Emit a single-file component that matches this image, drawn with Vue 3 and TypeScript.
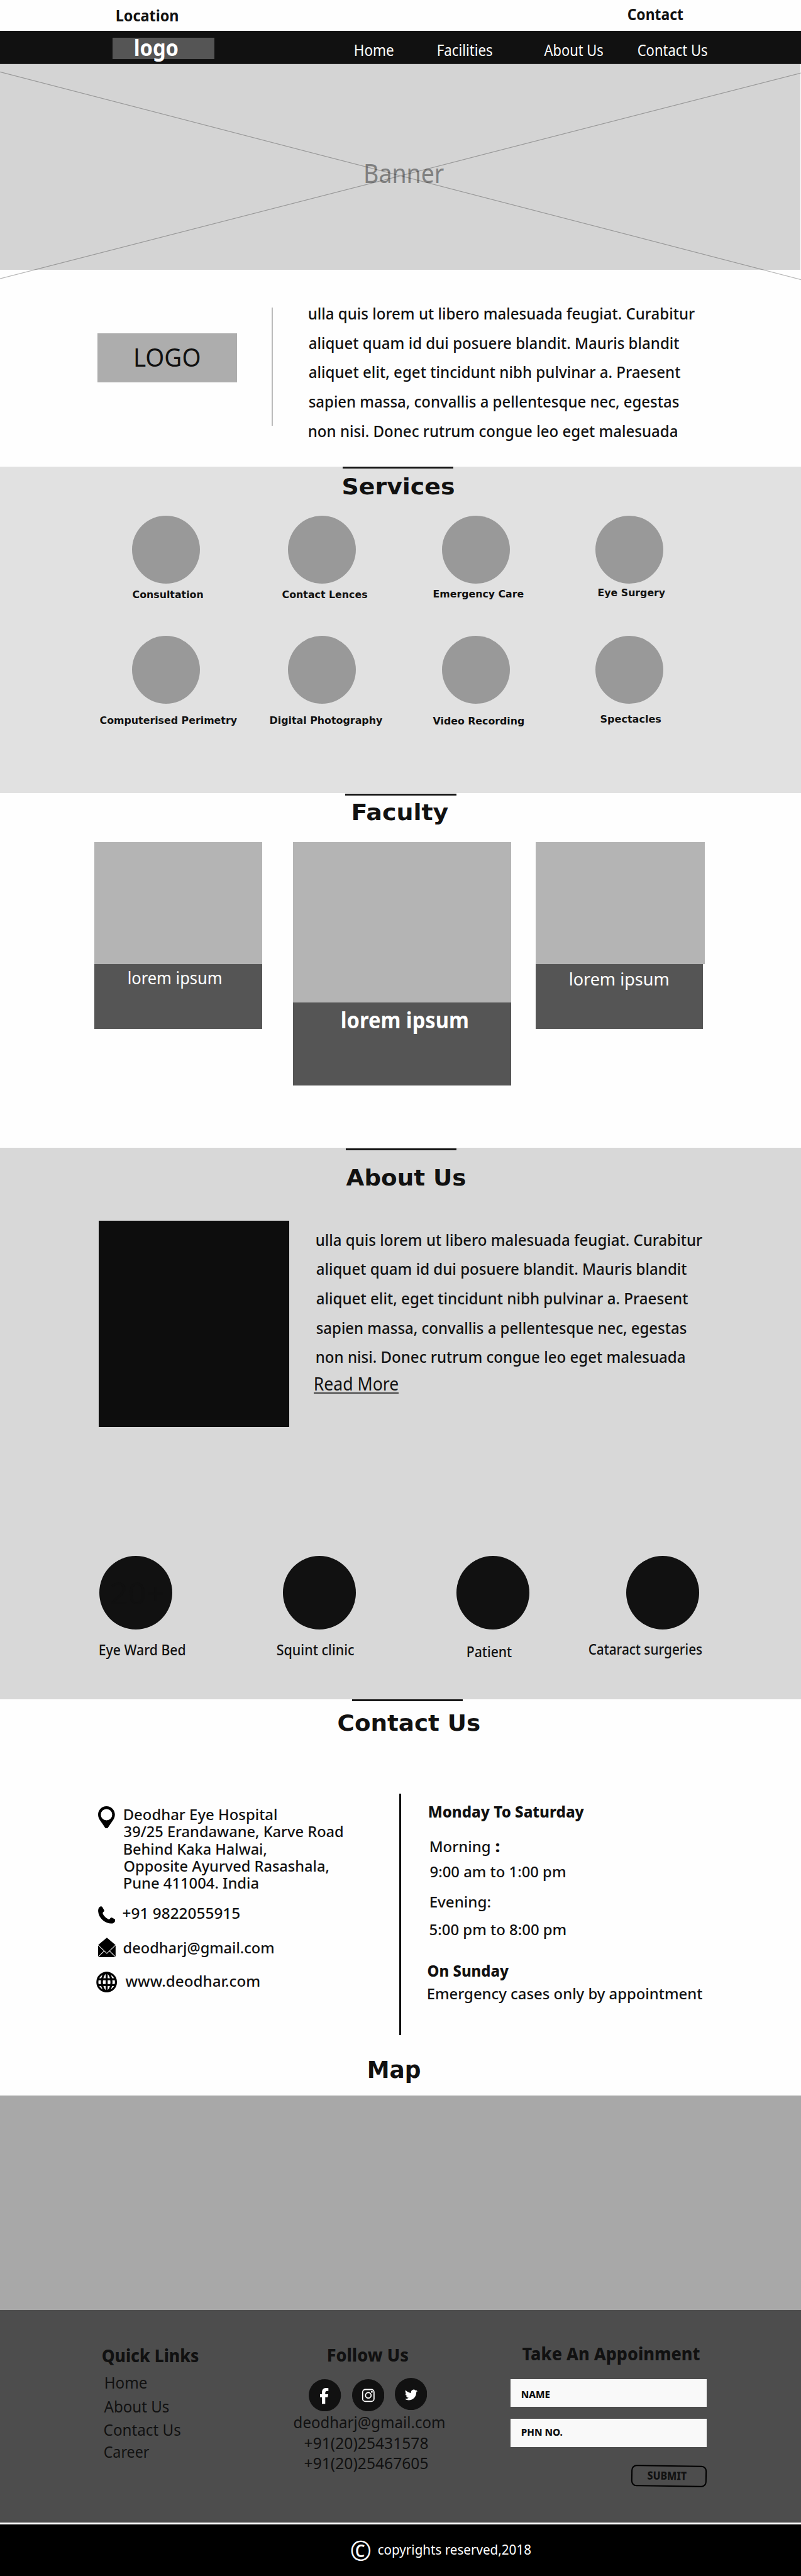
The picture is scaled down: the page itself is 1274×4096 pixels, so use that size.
<script setup lang="ts">
import type { Directive } from 'vue'

interface FacilityItem {
  label: string
  width: number
  dx: number
  dy: number
  value?: string
}

interface TextLine {
  text: string
  width: number
}

// Fits the ink of a one-line label to an exact width, starting at the element's left edge.
const context = document.createElement('canvas').getContext('2d')
const vFit: Directive<HTMLElement, number> = {
  mounted(el, binding) {
    if (!context) return
    const style = getComputedStyle(el)
    context.font = `${style.fontWeight} ${style.fontSize} ${style.fontFamily}`
    const m = context.measureText((el.textContent ?? '').trim())
    const ratio = binding.value / (m.actualBoundingBoxLeft + m.actualBoundingBoxRight)
    el.style.width = `${binding.value}px`
    el.style.setProperty('--shift', `${m.actualBoundingBoxLeft * ratio + 0.6}px`)
    el.style.setProperty('--fit', `${ratio}`)
  },
}

const paragraph: TextLine[] = [
  { text: 'ulla quis lorem ut libero malesuada feugiat. Curabitur', width: 657.8 },
  { text: 'aliquet quam id dui posuere blandit. Mauris blandit', width: 631.5 },
  { text: 'aliquet elit, eget tincidunt nibh pulvinar a. Praesent', width: 633.5 },
  { text: 'sapien massa, convallis a pellentesque nec, egestas', width: 630.5 },
  { text: 'non nisi. Donec rutrum congue leo eget malesuada', width: 628.3 },
]

const services: FacilityItem[] = [
  { label: 'Consultation', width: 121, dx: 0, dy: 10.8 },
  { label: 'Contact Lences', width: 145.5, dx: -11.3, dy: 10.8 },
  { label: 'Emergency Care', width: 154.3, dx: -14.9, dy: 9.8 },
  { label: 'Eye Surgery', width: 115, dx: 5.1, dy: 8.2 },
  { label: 'Computerised Perimetry', width: 235.1, dx: -54.9, dy: 20.8 },
  { label: 'Digital Photography', width: 192.5, dx: -31.3, dy: 20.8 },
  { label: 'Video Recording', width: 155.9, dx: -15.7, dy: 21.8 },
  { label: 'Spectacles', width: 102.8, dx: 8.7, dy: 17.8 },
]

const stats: FacilityItem[] = [
  { label: 'Eye Ward Bed', width: 145.5, dx: 0, dy: 22.1, value: '20+' },
  { label: 'Squint clinic', width: 131.5, dx: -11.3, dy: 22.8 },
  { label: 'Patient', width: 75.8, dx: 17.4, dy: 26.1 },
  { label: 'Cataract surgeries', width: 193.4, dx: -64.4, dy: 21.1 },
]

const address: TextLine[] = [
  { text: 'Deodhar Eye Hospital', width: 259.9 },
  { text: '39/25 Erandawane, Karve Road', width: 373.2 },
  { text: 'Behind Kaka Halwai,', width: 243.1 },
  { text: 'Opposite Ayurved Rasashala,', width: 349.3 },
  { text: 'Pune 411004. India', width: 228.9 },
]

const offset = (item: FacilityItem) => ({ marginLeft: `${item.dx}px`, marginTop: `${item.dy}px` })
</script>

<template>
  <div class="page">
    <div class="topbar">
      <span v-fit="105" class="t location">Location</span>
      <span v-fit="95" class="t contact-top">Contact</span>
    </div>

    <header class="nav">
      <div class="nav-logo"><span v-fit="73.5" class="t">logo</span></div>
      <nav class="nav-links">
        <a v-fit="65.4" class="t">Home</a>
        <a v-fit="92.4" class="t">Facilities</a>
        <a v-fit="100" class="t">About Us</a>
        <a v-fit="118" class="t">Contact Us</a>
      </nav>
    </header>

    <section class="banner">
      <span v-fit="134" class="t">Banner</span>
      <svg class="cross" viewBox="0 0 1366 370.3">
        <path d="M0 13.3 1366 367.3M0 365.8 1366 15" />
      </svg>
    </section>

    <section class="intro">
      <div class="intro-logo"><span v-fit="109.7" class="t">LOGO</span></div>
      <div class="intro-rule"></div>
      <div class="copy">
        <p v-for="line in paragraph" :key="line.text" v-fit="line.width" class="t">{{ line.text }}</p>
      </div>
    </section>

    <section class="services">
      <div class="bar"></div>
      <h2 v-fit="189" class="t">Services</h2>
      <div class="service-grid">
        <div v-for="s in services" :key="s.label" class="service">
          <div class="disc"></div>
          <span v-fit="s.width" class="t" :style="offset(s)">{{ s.label }}</span>
        </div>
      </div>
    </section>

    <section class="faculty">
      <div class="bar"></div>
      <h2 v-fit="163" class="t">Faculty</h2>
      <div class="cards">
        <div class="card">
          <div class="photo"></div>
          <div class="caption"><span v-fit="158.3" class="t">lorem ipsum</span></div>
        </div>
        <div class="card card-main">
          <div class="photo"></div>
          <div class="caption"><span v-fit="215" class="t">lorem ipsum</span></div>
        </div>
        <div class="card card-right">
          <div class="photo"></div>
          <div class="caption"><span v-fit="167.5" class="t">lorem ipsum</span></div>
        </div>
      </div>
    </section>

    <section class="about">
      <div class="bar"></div>
      <h2 v-fit="203.8" class="t">About Us</h2>
      <div class="about-body">
        <div class="about-image"></div>
        <div class="copy">
          <p v-for="line in paragraph" :key="line.text" v-fit="line.width" class="t">{{ line.text }}</p>
          <a v-fit="142.9" class="t more">Read More</a>
          <div class="more-line"></div>
        </div>
      </div>
      <div class="stats">
        <div v-for="s in stats" :key="s.label" class="stat">
          <div class="disc"><span v-if="s.value" v-fit="89" class="t">{{ s.value }}</span></div>
          <span v-fit="s.width" class="t label" :style="offset(s)">{{ s.label }}</span>
        </div>
      </div>
    </section>

    <section class="contact">
      <div class="bar"></div>
      <h2 v-fit="242.2" class="t">Contact Us</h2>
      <div class="contact-body">
        <div class="reach">
          <div class="row address">
            <svg class="pin" viewBox="0 0 28.7 38">
              <path fill-rule="evenodd" d="M14.35 0C6.2 0 0 6.5 0 14.3c0 4.300 1.700 7.500 3.900 10.700 2.600 3.800 5.400 7.500 7.900 11.500 1.300 2 3.800 2 5.100 0 2.500-4 5.300-7.700 7.900-11.500 2.200-3.200 3.900-6.400 3.900-10.700C28.700 6.500 22.500 0 14.350 0Zm0 4.700a9.700 9.700 0 1 1 0 19.400 9.700 9.700 0 0 1 0-19.400Z" />
            </svg>
            <div>
              <p v-for="line in address" :key="line.text" v-fit="line.width" class="t">{{ line.text }}</p>
            </div>
          </div>
          <div class="row phone">
            <svg viewBox="0 0 30 30">
              <path d="M3.500.500C5-.300 6.500 0 7.300 1.200L10.300 6.300C11 7.600 10.600 8.600 9.600 9.400 8 10.600 7.600 11.800 8.600 13.600 11 17.600 14 20.400 17.600 22.200 19 22.900 19.800 22.400 20.800 21 21.600 19.400 22.800 18.900 24.200 19.600L28.600 22C30 22.900 29.900 24.500 29 26.500 27.800 29 25.400 30 22.500 29.800 10.500 28.500 1.500 20.500.200 9-.200 5.500.800 1.900 3.500.500Z" />
            </svg>
            <span v-fit="199" class="t">+91 9822055915</span>
          </div>
          <div class="row mail">
            <svg viewBox="0 0 30 33.400">
              <path d="M15 0 30 12.500V33.400H0V12.500Z" />
              <path class="cut" d="M0 12.600 15 27 30 12.600M0 33 10.500 22.700M30 33 19.500 22.700" />
            </svg>
            <span v-fit="255.9" class="t">deodharj@gmail.com</span>
          </div>
          <div class="row web">
            <svg viewBox="0 0 36 36">
              <g class="grid">
                <circle cx="18" cy="18" r="16" />
                <ellipse cx="18" cy="18" rx="8.300" ry="16" />
                <path d="M18 2V34M2.500 13H33.500M2.500 23H33.500" />
              </g>
            </svg>
            <span v-fit="228.5" class="t">www.deodhar.com</span>
          </div>
        </div>
        <div class="contact-rule"></div>
        <div class="hours">
          <strong v-fit="265.2" class="t monday">Monday To Saturday</strong>
          <div class="morning">
            <span v-fit="101.4" class="t">Morning</span>
            <strong v-fit="6" class="t">:</strong>
          </div>
          <span v-fit="230" class="t am">9:00 am to 1:00 pm</span>
          <span v-fit="102.7" class="t evening">Evening:</span>
          <span v-fit="231.9" class="t pm">5:00 pm to 8:00 pm</span>
          <strong v-fit="138.9" class="t sunday">On Sunday</strong>
          <span v-fit="468.1" class="t emergency">Emergency cases only by appointment</span>
        </div>
      </div>
      <h2 v-fit="88" class="t map-title">Map</h2>
    </section>

    <div class="map"></div>

    <footer class="footer">
      <div class="links">
        <h3 v-fit="164.3" class="t">Quick Links</h3>
        <a v-fit="71.4" class="t home">Home</a>
        <a v-fit="111.2" class="t about-link">About Us</a>
        <a v-fit="131" class="t contact-link">Contact Us</a>
        <a v-fit="77.5" class="t career">Career</a>
      </div>
      <div class="follow">
        <h3 v-fit="137" class="t">Follow Us</h3>
        <div class="social">
          <svg viewBox="0 0 55 55">
            <circle cx="27.500" cy="27.500" r="27.500" />
            <path class="white" transform="translate(18.600 15) scale(.0490 .0527)" d="M80 299.300V512H196V299.300h86.500l18-97.800H196V166.900c0-51.700 20.300-71.500 72.700-71.500 16.300 0 29.400.4 37 1.200V7.900C291.400 4 256.400 0 236.200 0 129.300 0 80 50.500 80 159.400v42.100H14v97.800H80z" />
          </svg>
          <svg viewBox="0 0 55 55">
            <circle cx="27.500" cy="27.500" r="27.500" />
            <rect class="line" x="18" y="17.700" width="19.400" height="20.200" rx="4.500" />
            <circle class="line" cx="27.700" cy="27.600" r="4.800" />
            <circle class="white" cx="33.700" cy="21.700" r="1.500" />
          </svg>
          <svg viewBox="0 0 55 55">
            <circle cx="27.500" cy="27.500" r="27.500" />
            <path class="white" transform="translate(17 18) scale(.905 .920)" d="M23.953 4.570a10 10 0 01-2.825.775 4.958 4.958 0 002.163-2.723c-.951.555-2.005.959-3.127 1.184a4.920 4.920 0 00-8.384 4.482C7.690 8.095 4.067 6.130 1.640 3.162a4.822 4.822 0 00-.666 2.475c0 1.710.870 3.213 2.188 4.096a4.904 4.904 0 01-2.228-.616v.060a4.923 4.923 0 003.946 4.827 4.996 4.996 0 01-2.212.085 4.936 4.936 0 004.604 3.417 9.867 9.867 0 01-6.102 2.105c-.390 0-.779-.023-1.170-.067a13.995 13.995 0 007.557 2.209c9.053 0 13.998-7.496 13.998-13.985 0-.210 0-.420-.015-.630A9.935 9.935 0 0024 4.590z" />
          </svg>
        </div>
        <span v-fit="256.6" class="t mail-link">deodharj@gmail.com</span>
        <span v-fit="210.7" class="t tel-1">+91(20)25431578</span>
        <span v-fit="210.7" class="t tel-2">+91(20)25467605</span>
      </div>
      <form class="appointment">
        <h3 v-fit="302.6" class="t">Take An Appoinment</h3>
        <label class="field"><span v-fit="48.3" class="t">NAME</span></label>
        <label class="field field-phone"><span v-fit="69.3" class="t">PHN NO.</span></label>
        <div class="submit"><span v-fit="67.2" class="t">SUBMIT</span></div>
      </form>
    </footer>

    <div class="copyright">
      <span v-fit="33.3" class="t mark">©</span>
      <span v-fit="260" class="t note">copyrights reserved,2018</span>
    </div>
  </div>
</template>

<style>
body {
  margin: 0;
  background: #fefefe;
}
</style>

<style scoped>
.page {
  width: 1366px;
  zoom: 0.93265;
  overflow: hidden;
  background: #fefefe;
  color: #111;
  font-family: 'Noto Sans', 'Open Sans', sans-serif;
  font-size: 25px;
}
.t {
  --shift: 0px;
  --fit: 1;
  --drop: 0.8px;
  --tall: 1.04;
  display: block;
  flex: none;
  margin: 0;
  line-height: 1;
  white-space: nowrap;
  transform-origin: 0 50%;
  transform: translate(var(--shift), var(--drop)) scale(var(--fit), var(--tall));
}
svg {
  display: block;
  flex: none;
}
h2.t {
  --drop: 0.2px;
  --tall: 1.01;
  font-family: 'DejaVu Sans', sans-serif;
  font-weight: 700;
  font-size: 38px;
}
.bar {
  width: 189px;
  height: 3.3px;
  background: #161616;
}

.topbar {
  display: flex;
  height: 53px;
  padding-left: 198px;
  box-sizing: border-box;
  font-weight: 700;
}
.location { margin-top: 13.8px; }
.contact-top { margin: 11.5px 0 0 767.6px; }

.nav {
  display: flex;
  height: 56.7px;
  box-sizing: border-box;
  padding-left: 191.6px;
  border-bottom: 1px solid #333;
  background: #111;
  color: #fff;
}
.nav-logo {
  width: 174.3px;
  height: 36.5px;
  margin-top: 11px;
  background: #555;
}
.nav-logo .t {
  margin: -1.4px 0 0 37.4px;
  font-size: 36.8px;
  font-weight: 700;
}
.nav-links {
  display: flex;
  margin: 19.5px 0 0 238.7px;
  font-size: 25.3px;
}
.nav-links .t:nth-child(2) { margin-left: 76.6px; }
.nav-links .t:nth-child(3) { margin-left: 88px; }
.nav-links .t:nth-child(4) { margin-left: 60px; }

.banner {
  position: relative;
  display: flex;
  width: 1365px;
  height: 349.8px;
  background: #d4d4d4;
  color: #808080;
}
.banner .t {
  margin: 165.4px 0 0 623px;
  font-size: 43px;
}
.cross {
  position: absolute;
  left: 0;
  top: 0;
  width: 1366px;
  height: 370.3px;
  fill: none;
  stroke: rgba(0, 0, 0, 0.28);
  stroke-width: 1.3;
}

.intro {
  display: flex;
  height: 336.5px;
}
.intro-logo {
  width: 237.8px;
  height: 84.3px;
  margin: 108.5px 0 0 166.4px;
  background: #adadad;
}
.intro-logo .t {
  margin: 19px 0 0 64.5px;
  font-size: 42px;
}
.intro-rule {
  width: 1.5px;
  height: 202px;
  margin: 64.5px 0 0 59.3px;
  background: #bbb;
}
.copy p {
  font-size: 26.6px;
  font-weight: 500;
  line-height: 50px;
}
.intro .copy { margin: 48.9px 0 0 61.7px; }

.services {
  height: 556.3px;
  background: #e1e1e1;
}
.services .bar { margin-left: 584.6px; }
.services h2 { margin: 11.5px 0 0 584.6px; }
.service-grid {
  display: grid;
  grid-template-columns: 266.5px 262.3px 261.3px 116px;
  grid-auto-rows: 205px;
  padding: 30.1px 0 0 224.8px;
}
.services,
.faculty,
.about,
.contact {
  display: flow-root;
}
.service .disc {
  width: 116px;
  height: 116px;
  border-radius: 50%;
  background: #999;
}
.service .t {
  --drop: 0.2px;
  --tall: 1.1;
  font-family: 'DejaVu Sans', sans-serif;
  font-weight: 700;
  font-size: 16px;
}

.faculty { height: 604.7px; }
.faculty .bar { margin: 0.7px 0 0 588.9px; }
.faculty h2 { margin: 10.1px 0 0 601px; }
.cards {
  display: flex;
  align-items: flex-start;
  padding: 31.7px 0 0 161.2px;
}
.card { width: 285.4px; }
.photo {
  height: 207.3px;
  background: #b4b4b4;
}
.caption {
  display: flow-root;
  height: 111px;
  background: #555;
  color: #fff;
}
.caption .t {
  margin: 10.3px 0 0 57.5px;
  font-size: 27.5px;
}
.card-main {
  width: 372px;
  margin: 0 41.8px 0 53.4px;
}
.card-main .photo { height: 273.4px; }
.card-main .caption { height: 140.8px; }
.card-main .t {
  margin: 10.4px 0 0 82px;
  font-size: 37px;
  font-weight: 700;
}
.card-right .photo { width: 288.2px; }
.card-right .t {
  margin: 10.5px 0 0 58.2px;
  font-size: 29px;
}

.about {
  height: 939.7px;
  background: #d8d8d8;
}
.about .bar { margin: 1px 0 0 589.8px; }
.about h2 {
  margin: 27.2px 0 0 589.8px;
  font-size: 38.5px;
}
.about-body {
  display: flex;
  margin-top: 54.1px;
  padding-left: 168px;
}
.about-image {
  width: 325px;
  height: 351.7px;
  background: #0d0d0d;
}
.about .copy { margin: 6.4px 0 0 46.3px; }
.more {
  margin: 6.5px 0 0 -3.6px;
  font-size: 29.4px;
}
.more-line {
  width: 145px;
  height: 2px;
  margin: 0.7px 0 0 -4.3px;
  background: #444;
}
.stats {
  display: grid;
  grid-template-columns: 313.6px 296.2px 289.2px 125px;
  padding: 220.3px 0 0 169px;
}
.stat .disc {
  display: flow-root;
  width: 124.5px;
  height: 125px;
  border-radius: 50%;
  background: #111;
  color: #101010;
}
.stat .disc .t {
  margin: 38.5px 0 0 20px;
  font-size: 49px;
}
.stat .label {
  font-size: 23.5px;
  font-weight: 500;
}

.contact {
  height: 675.8px;
  font-weight: 500;
}
.contact .bar { margin-left: 600.2px; }
.contact h2 {
  margin: 18.7px 0 0 575.8px;
  font-size: 38.5px;
}
.contact-body {
  display: flex;
  margin-top: 101.1px;
}
.reach {
  width: 681px;
  box-sizing: border-box;
  padding: 20.3px 0 0 164.3px;
}
.row {
  display: flex;
  align-items: flex-start;
}
.address p { line-height: 29.15px; }
.pin {
  width: 28.7px;
  height: 38px;
  margin: 0.4px 16px 0 2.7px;
}
.phone {
  height: 30px;
  margin-top: 24.75px;
}
.phone svg {
  width: 29.6px;
  height: 30px;
  margin: 0.9px 12.9px 0 2.7px;
}
.mail {
  height: 33.4px;
  margin-top: 24.2px;
}
.mail svg {
  width: 29.9px;
  height: 33.4px;
  margin: 0 13.1px 0 2.7px;
}
.mail .t { margin-top: 4.8px; }
.mail .cut {
  fill: none;
  stroke: #fff;
  stroke-width: 1.1;
}
.web { margin-top: 24.3px; }
.web svg {
  width: 35.7px;
  height: 35.7px;
  margin-right: 13.3px;
}
.web .t { margin-top: 3.5px; }
.grid {
  fill: none;
  stroke: #000;
  stroke-width: 3.5;
}
.contact-rule {
  width: 2.6px;
  height: 411.3px;
  background: #111;
}
.hours { padding: 18px 0 0 45.3px; }
.hours strong { font-weight: 800; }
.monday {
  margin-left: 2.7px;
  font-size: 25.5px;
}
.morning {
  display: flex;
  margin: 33.1px 0 0 5px;
}
.morning strong { margin-left: 9.2px; }
.am { margin: 17.9px 0 0 4.1px; }
.evening { margin: 26.4px 0 0 4.1px; }
.pm { margin: 22.9px 0 0 3.8px; }
.sunday {
  margin: 45.7px 0 0 0.4px;
  font-size: 25.5px;
}
.emergency { margin-top: 12.7px; }
.contact .map-title {
  margin: 40.4px 0 0 628px;
  font-size: 39px;
}

.map {
  height: 365.5px;
  background: #a8a8a8;
}

.footer {
  display: flex;
  height: 362.7px;
  padding-left: 173.7px;
  background: #4d4d4d;
  border-bottom: 3.3px solid #fff;
  font-size: 25.5px;
}
.footer h3 {
  font-size: 29px;
  font-weight: 800;
}
.links {
  width: 326.7px;
  padding-top: 62.25px;
}
.home { margin: 21.1px 0 0 5.3px; }
.about-link { margin: 14.8px 0 0 3.1px; }
.contact-link { margin: 13.9px 0 0 3.3px; }
.career { margin: 12.1px 0 0 3.3px; }
.follow {
  width: 370.6px;
  padding-top: 61.9px;
}
.follow h3 { margin-left: 58.1px; }
.social {
  display: flex;
  gap: 18.2px;
  height: 57px;
  margin: 25.1px 0 0 26.4px;
}
.social svg {
  width: 55px;
  height: 55px;
  margin-top: 2px;
  fill: #111;
}
.social svg:last-child { margin-top: 0; }
.social .white { fill: #fff; }
.social .line {
  fill: none;
  stroke: #fff;
  stroke-width: 1.9;
}
.mail-link { margin-top: 6.7px; }
.tel-1 { margin: 9.9px 0 0 18.4px; }
.tel-2 { margin: 8.8px 0 0 18.4px; }
.appointment {
  width: 334.7px;
  padding-top: 58.95px;
}
.appointment h3 {
  margin: 0 0 30px 18.9px;
}
.field {
  display: flow-root;
  height: 47.7px;
  background: #f9f9f9;
}
.field .t {
  margin: 17.2px 0 0 17.7px;
  font-size: 17px;
  font-weight: 800;
}
.field-phone { margin-top: 20.3px; }
.field-phone .t { margin-top: 14.2px; }
.submit {
  display: flow-root;
  width: 128.5px;
  height: 36px;
  margin: 31.3px 0 0 205px;
  box-sizing: border-box;
  border: 3px solid #000;
  border-radius: 9px;
  transform: rotate(0.9deg);
}
.submit .t {
  margin: 4.9px 0 0 24.3px;
  font-size: 18.5px;
  font-weight: 800;
}

.copyright {
  display: flex;
  height: 88px;
  padding-left: 598.7px;
  background: #000;
  color: #fff;
}
.mark {
  margin-top: 21px;
  font-size: 45px;
}
.note {
  margin: 31.4px 0 0 12.6px;
  font-size: 22.9px;
}
</style>
